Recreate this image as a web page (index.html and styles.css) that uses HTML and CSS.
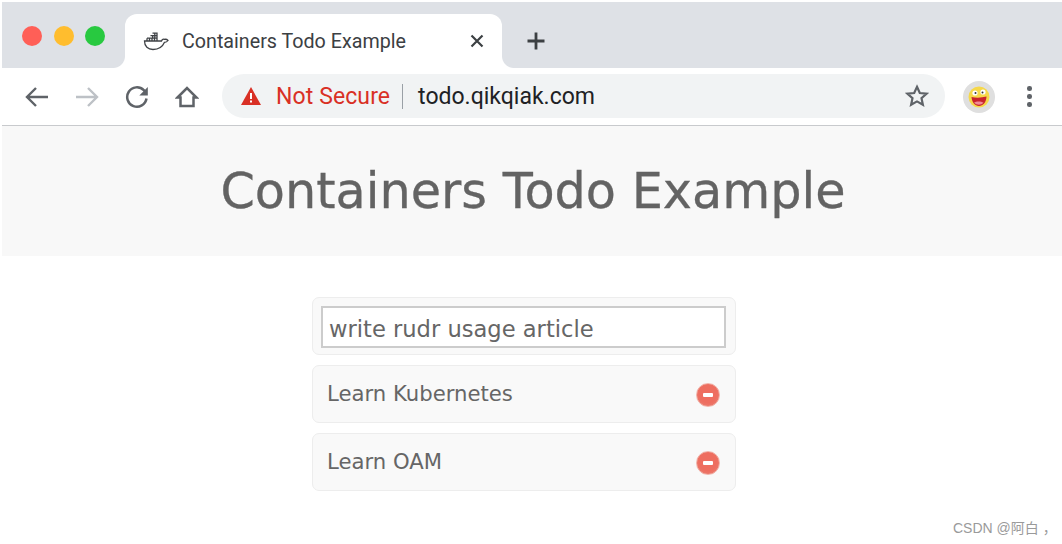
FILE: index.html
```html
<!DOCTYPE HTML>
<html lang="en-US">
<head>
<meta charset="UTF-8">
<title>Containers Todo Example</title>
<link rel="stylesheet" href="styles.css">
</head>
<body>
<div class="tabstrip">
	<div class="lights"><i class="red"></i><i class="yellow"></i><i class="green"></i></div>
	<div class="tab">
		<svg class="favicon" width="26" height="20" viewBox="0 0 26 20" fill="none" stroke="#3f4246" stroke-width="1.300">
			<path d="M1.500 10h17c.6-1.600 2-2.200 3-1.600.8-.2 2.500 0 3.500 1.100-1 1.500-2.500 1.800-3.500 1.800C19.500 16 15 18.500 10 18.500c-5 0-8.500-3-8.500-8.500z"/>
			<path d="M4 7.200h10V10M4 7.200V10M6.500 7.200V10M9 7.200V10M11.500 7.200V10M7.500 4.700h6.500v2.500M9.700 4.700v2.500M11.800 4.700v2.500M9.500 2.200h4.500v2.500M11.800 2.200v2.500"/>
		</svg>
		<span class="tab_title">Containers Todo Example</span>
		<svg class="tab_close" width="14" height="14" viewBox="0 0 14 14" stroke="#3c4043" stroke-width="2.200"><path d="M1.500 1.500l11 11M12.500 1.500l-11 11"/></svg>
	</div>
	<svg class="newtab" width="20" height="20" viewBox="0 0 20 20" stroke="#3c4043" stroke-width="2.800"><path d="M10 1.500v17M1.500 10h17"/></svg>
</div>
<div class="toolbar">
	<svg class="nav" width="26" height="24" viewBox="0 0 26 24" fill="none" stroke="#5f6368" stroke-width="2.400"><path d="M24 12H3M12 3l-9 9 9 9"/></svg>
	<svg class="nav" width="26" height="24" viewBox="0 0 26 24" fill="none" stroke="#bdc1c6" stroke-width="2.400"><path d="M2 12h21M14 3l9 9-9 9"/></svg>
	<svg class="nav" width="24" height="24" viewBox="0 0 24 24" fill="none" stroke="#5f6368" stroke-width="2.500"><path d="M21.500 13.500A9.700 9.700 0 1 1 18.800 5.200L21 7.500"/><path d="M22.800 2v8.500h-8.500z" stroke="none" fill="#5f6368"/></svg>
	<svg class="nav" width="24" height="24" viewBox="0 0 24 24" fill="none" stroke="#5f6368" stroke-width="2.500"><path d="M2.500 12.500L12 3l9.500 9.500H18.500V21h-13v-8.500z"/></svg>
	<div class="omnibox">
		<svg class="warn" width="20" height="18" viewBox="0 0 20 18"><path d="M10 0L20 18H0z" fill="#d93025"/><path d="M9 6h2v6H9zM9 13.500h2v2H9z" fill="#fff"/></svg>
		<span class="not_secure">Not Secure</span>
		<span class="url">todo.qikqiak.com</span>
		<svg class="star" width="24" height="24" viewBox="0 0 24 24" fill="none" stroke="#5f6368" stroke-width="2.200"><path d="M12 2.800l2.800 6.200 6.700.7-5 4.500 1.400 6.600L12 17.400l-5.900 3.400 1.400-6.600-5-4.500 6.700-.7z"/></svg>
	</div>
	<div class="avatar">
		<svg width="24" height="24" viewBox="0 0 24 24">
			<circle cx="12" cy="12" r="10.500" fill="#f6d84a"/>
			<circle cx="8" cy="8" r="2.600" fill="#fff"/><circle cx="16" cy="7" r="2.600" fill="#fff"/>
			<circle cx="8.500" cy="8" r="1" fill="#333"/><circle cx="15.500" cy="7.400" r="1" fill="#333"/>
			<path d="M4.500 12c5 1 10 .8 15-.5-.3 6-3.500 9.500-7.500 9.500s-7-3.500-7.500-9z" fill="#c9232c"/>
			<path d="M7 17.500c2-1.500 7-1.500 9.500 0-2 3-7 3-9.500 0z" fill="#f28a96"/>
		</svg>
	</div>
	<div class="menu"><i></i><i></i><i></i></div>
</div>
<div class="header"><h1>Containers Todo Example</h1></div>
<div class="todo">
	<div class="card"><input class="new_todo" type="text" value="write rudr usage article"></div>
	<div class="card item"><span>Learn Kubernetes</span><b class="remove"></b></div>
	<div class="card item"><span>Learn OAM</span><b class="remove"></b></div>
</div>
<div class="watermark">CSDN @阿白 ，</div>
</body>
</html>
```

FILE: styles.css
```css
html, body, div, h1, input { margin:0; padding:0; }
body { position:relative; width:1060px; height:542px; padding:2px 0 0 2px; overflow:hidden; background-color:#FFF; font-family:"DejaVu Sans",sans-serif; color:#666; }
i, b { display:block; }
svg { display:block; flex:none; }

.tabstrip { display:flex; align-items:flex-end; height:66px; background-color:#DEE1E6; }
.lights { display:flex; gap:11.500px; width:123px; height:42px; padding:0 0 0 20px; box-sizing:border-box; }
.lights i { width:20px; height:20px; border-radius:50%; }
.red { background-color:#FF5F57; }
.yellow { background-color:#FFBD2E; }
.green { background-color:#28C940; }
.tab { position:relative; display:flex; align-items:center; width:377px; height:54px; background-color:#FFF; border-radius:12px 12px 0 0; }
.tab:before, .tab:after { content:""; position:absolute; bottom:0; width:12px; height:12px; }
.tab:before { left:-12px; background:radial-gradient(circle at 0 0,#DEE1E6 11.500px,#FFF 12.500px); }
.tab:after { right:-12px; background:radial-gradient(circle at 100% 0,#DEE1E6 11.500px,#FFF 12.500px); }
.favicon { margin-left:18px; }
.tab_title { margin-left:13px; font:19.700px Roboto,sans-serif; color:#3C4043; }
.tab_close { margin-left:auto; margin-right:18px; }
.newtab { margin:0 0 17px 24px; }

.toolbar { display:flex; align-items:center; height:57px; border-bottom:1px solid #C8CACD; }
.nav { margin-left:24px; }
.nav:first-child { margin-left:22px; }
.nav:nth-child(3) { margin-left:25px; }
.nav:nth-child(4) { margin-left:26px; }
.omnibox { display:flex; align-items:center; width:723px; height:44px; margin:0 0 1px 23px; background-color:#F1F3F4; border-radius:22px; }
.warn { margin-left:19px; }
.not_secure { margin-left:15px; padding-right:12px; border-right:1px solid #9AA0A6; font:23px/25px Roboto,sans-serif; letter-spacing:.1px; color:#D93025; }
.url { margin-left:15px; font:23px Roboto,sans-serif; color:#202124; }
.star { margin-left:auto; margin-right:16px; }
.avatar { display:flex; align-items:center; justify-content:center; width:32px; height:32px; margin-left:18px; background-color:#DFDFDF; border-radius:50%; }
.menu { display:flex; flex-direction:column; gap:3.500px; margin-left:32px; }
.menu i { width:4.500px; height:4.500px; background-color:#5F6368; border-radius:50%; }

.header { height:130px; background-color:#F8F8F8; }
h1 { padding-top:33px; padding-left:2px; font-size:49.300px; font-weight:normal; line-height:64px; text-align:center; color:#636363; -webkit-text-stroke:.3px #636363; }

.todo { width:424px; margin:41px 0 0 310px; }
.card { box-sizing:border-box; height:58px; margin-bottom:10px; padding:8px 9px 8px 8px; background-color:#F9F9F9; border:1px solid #EDEDED; border-radius:7px; }
.new_todo { display:block; box-sizing:border-box; width:100%; height:42px; padding:4px 6px 0; background-color:#FFF; border:2px solid #CCC; font:22.600px "DejaVu Sans",sans-serif; color:#666; outline:none; }
.item { display:flex; align-items:center; justify-content:space-between; padding:0 15px 0 14px; font-size:21.200px; color:#666; }
.item span { margin-bottom:2px; }
.remove { position:relative; width:24px; height:24px; margin-top:1px; background:radial-gradient(circle at 50% 45%,#EE6E60 55%,#E8877A); border:1px solid #F2B3A9; box-sizing:border-box; border-radius:50%; }
.remove:after { content:""; position:absolute; top:9px; left:6px; width:10px; height:4px; background-color:#FFF; border-radius:1px; }

.watermark { position:absolute; top:517px; left:953px; font:14px "Liberation Sans","Noto Sans CJK SC",sans-serif; color:#9A9A9A; white-space:nowrap; }
```
